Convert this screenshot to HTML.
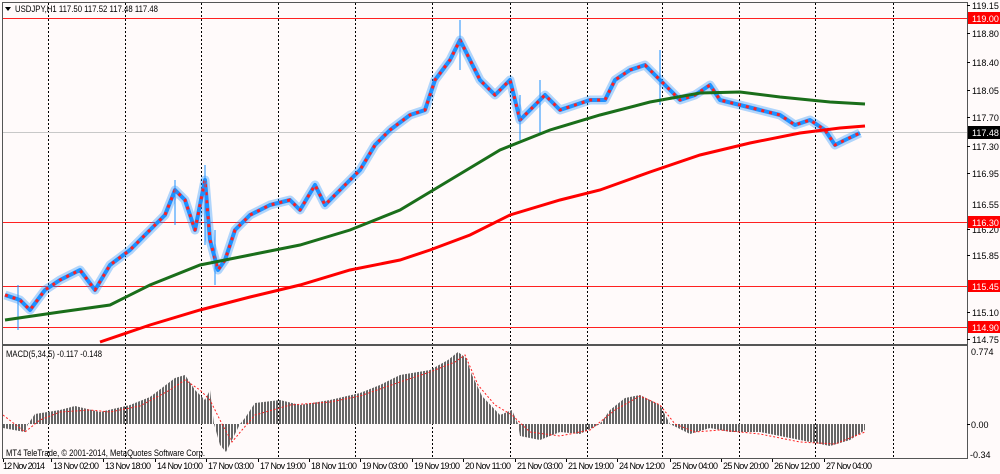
<!DOCTYPE html>
<html><head><meta charset="utf-8"><style>
html,body{margin:0;padding:0;background:#fff;}
svg{display:block;font-family:"Liberation Sans",sans-serif;}
</style></head><body>
<svg width="1000" height="474" viewBox="0 0 1000 474" xmlns="http://www.w3.org/2000/svg">
<defs>
<pattern id="st" width="3" height="10" patternUnits="userSpaceOnUse"><rect x="0" y="0" width="2" height="10" fill="#666"/></pattern>
</defs>
<rect width="1000" height="474" fill="#fffafa"/>
<g stroke="#000" stroke-width="1" stroke-dasharray="2,2">
<line x1="48.5" y1="3" x2="48.5" y2="458"/><line x1="125.5" y1="3" x2="125.5" y2="458"/><line x1="201.5" y1="3" x2="201.5" y2="458"/><line x1="278.5" y1="3" x2="278.5" y2="458"/><line x1="355.5" y1="3" x2="355.5" y2="458"/><line x1="432.5" y1="3" x2="432.5" y2="458"/><line x1="510.5" y1="3" x2="510.5" y2="458"/><line x1="587.5" y1="3" x2="587.5" y2="458"/><line x1="662.5" y1="3" x2="662.5" y2="458"/><line x1="739.5" y1="3" x2="739.5" y2="458"/><line x1="815.5" y1="3" x2="815.5" y2="458"/><line x1="893.5" y1="3" x2="893.5" y2="458"/>
</g>
<g stroke="#ff2020" stroke-width="1">
<line x1="3" y1="18.5" x2="967" y2="18.5"/><line x1="3" y1="222.5" x2="967" y2="222.5"/><line x1="3" y1="286.5" x2="967" y2="286.5"/><line x1="3" y1="327.5" x2="967" y2="327.5"/>
</g>
<line x1="3" y1="132.5" x2="967" y2="132.5" stroke="#c8c8c8"/>
<polyline fill="none" stroke="#1e90ff" stroke-width="9" stroke-opacity="0.35" stroke-linejoin="round" points="5,295 20,300 30,310 45,290 60,280 80,270 95,290 110,265 130,250 150,230 165,215 175,190 185,200 195,230 205,180 210,240 218,270 225,260 235,230 250,215 270,205 290,200 300,210 315,185 325,205 345,185 360,170 375,145 390,130 410,115 425,110 435,80 450,60 460,40 470,60 480,80 495,95 510,80 520,120 530,110 545,95 560,110 575,105 590,100 605,100 615,80 630,70 645,65 660,80 670,90 680,100 695,95 710,85 720,100 740,105 760,110 780,115 795,125 810,120 825,130 835,145 845,140 860,133"/>
<polyline fill="none" stroke="#1e90ff" stroke-width="4" stroke-linejoin="round" points="5,295 20,300 30,310 45,290 60,280 80,270 95,290 110,265 130,250 150,230 165,215 175,190 185,200 195,230 205,180 210,240 218,270 225,260 235,230 250,215 270,205 290,200 300,210 315,185 325,205 345,185 360,170 375,145 390,130 410,115 425,110 435,80 450,60 460,40 470,60 480,80 495,95 510,80 520,120 530,110 545,95 560,110 575,105 590,100 605,100 615,80 630,70 645,65 660,80 670,90 680,100 695,95 710,85 720,100 740,105 760,110 780,115 795,125 810,120 825,130 835,145 845,140 860,133"/>
<polyline fill="none" stroke="#ff2020" stroke-width="3" stroke-dasharray="3,5" stroke-linejoin="round" points="5,295 20,300 30,310 45,290 60,280 80,270 95,290 110,265 130,250 150,230 165,215 175,190 185,200 195,230 205,180 210,240 218,270 225,260 235,230 250,215 270,205 290,200 300,210 315,185 325,205 345,185 360,170 375,145 390,130 410,115 425,110 435,80 450,60 460,40 470,60 480,80 495,95 510,80 520,120 530,110 545,95 560,110 575,105 590,100 605,100 615,80 630,70 645,65 660,80 670,90 680,100 695,95 710,85 720,100 740,105 760,110 780,115 795,125 810,120 825,130 835,145 845,140 860,133"/>
<g stroke="#1e90ff" stroke-width="1">
<line x1="175" y1="180" x2="175" y2="225"/><line x1="205" y1="165" x2="205" y2="245"/><line x1="215" y1="230" x2="215" y2="285"/><line x1="460" y1="20" x2="460" y2="70"/><line x1="520" y1="95" x2="520" y2="140"/><line x1="660" y1="50" x2="660" y2="105"/><line x1="540" y1="80" x2="540" y2="135"/><line x1="18" y1="285" x2="18" y2="330"/>
</g>
<polyline fill="none" stroke="#1a6e1a" stroke-width="3" points="5,320 60,312 110,305 150,285 200,265 250,255 300,245 350,230 400,210 450,180 500,150 550,130 600,115 650,102 700,93 740,92 780,97 830,102 865,104"/>
<polyline fill="none" stroke="#ff0000" stroke-width="3" points="100,342 150,325 200,310 250,297 300,285 350,270 400,260 430,250 470,235 510,215 560,200 600,190 650,172 700,155 750,143 800,133 840,128 865,126"/>
<polygon fill="url(#st)" points="3,424 3,428 25,432 28,424 35,414 60,410 75,406 100,412 130,405 150,397 175,378 185,375 195,390 205,400 210,390 214,424 220,445 226,452 232,440 240,424 245,418 255,403 280,400 300,405 330,400 360,393 380,385 400,375 430,370 448,360 458,352 466,358 472,375 482,396 500,415 512,410 518,424 520,436 540,440 560,432 580,434 600,424 610,410 625,398 640,395 660,405 670,424 690,434 710,428 730,432 760,432 800,440 830,446 850,440 865,430 865,424"/>
<polyline fill="none" stroke="#ff2020" stroke-width="1" stroke-dasharray="2,2" points="3,415 25,432 40,420 60,412 90,410 110,412 140,406 170,390 185,380 200,390 210,400 222,424 232,442 242,430 255,415 290,405 330,402 360,396 400,382 430,372 455,362 465,355 478,385 495,405 512,415 530,432 560,436 590,430 615,410 640,396 660,405 675,424 695,432 720,430 760,434 800,442 835,444 865,432"/>
<g stroke="#555" fill="none">
<rect x="2.5" y="2.5" width="965" height="342"/>
<rect x="2.5" y="345.5" width="965" height="113"/>
</g>
<polygon points="5,7 11,7 8,11" fill="#000"/>
<text x="15" y="12" font-size="9" fill="#000" textLength="143" lengthAdjust="spacingAndGlyphs">USDJPY,H1  117.50 117.52 117.48 117.48</text>
<text x="6" y="357" font-size="9" fill="#000" textLength="96" lengthAdjust="spacingAndGlyphs">MACD(5,34,5) -0.117 -0.148</text>
<text x="6" y="456" font-size="9" fill="#000" textLength="199" lengthAdjust="spacingAndGlyphs">MT4 TeleTrade, © 2001-2014, MetaQuotes Software Corp.</text>
<g font-size="9" fill="#000">
<text x="972" y="9">119.15</text><text x="972" y="37">118.80</text><text x="972" y="66">118.40</text><text x="972" y="94">118.05</text><text x="972" y="121">117.70</text><text x="972" y="150">117.30</text><text x="972" y="177">116.95</text><text x="972" y="208">116.55</text><text x="972" y="233">116.20</text><text x="972" y="259">115.85</text><text x="972" y="316">115.10</text><text x="972" y="343">114.75</text>
<text x="971" y="355">0.774</text><text x="971" y="428">0.00</text><text x="970" y="458">-0.34</text>
</g>
<g stroke="#000"><line x1="967" y1="5.5" x2="970" y2="5.5"/><line x1="967" y1="33.5" x2="970" y2="33.5"/><line x1="967" y1="62.5" x2="970" y2="62.5"/><line x1="967" y1="90.5" x2="970" y2="90.5"/><line x1="967" y1="117.5" x2="970" y2="117.5"/><line x1="967" y1="146.5" x2="970" y2="146.5"/><line x1="967" y1="173.5" x2="970" y2="173.5"/><line x1="967" y1="229.5" x2="970" y2="229.5"/><line x1="967" y1="255.5" x2="970" y2="255.5"/><line x1="967" y1="312.5" x2="970" y2="312.5"/><line x1="967" y1="339.5" x2="970" y2="339.5"/><line x1="967" y1="424.5" x2="970" y2="424.5"/></g>
<rect x="968" y="12" width="32" height="12" fill="#ff0000"/><text x="972" y="22" font-size="9" fill="#fff">119.00</text>
<rect x="968" y="126" width="32" height="13" fill="#000"/><text x="972" y="136" font-size="9" fill="#fff">117.48</text>
<rect x="968" y="216" width="32" height="12" fill="#ff0000"/><text x="972" y="226" font-size="9" fill="#fff">116.30</text>
<rect x="968" y="280" width="32" height="12" fill="#ff0000"/><text x="972" y="290" font-size="9" fill="#fff">115.45</text>
<rect x="968" y="321" width="32" height="12" fill="#ff0000"/><text x="972" y="331" font-size="9" fill="#fff">114.90</text>
<g font-size="9" fill="#000" lengthAdjust="spacingAndGlyphs">
<text x="3" y="469" textLength="42">12 Nov 2014</text>
<text x="53" y="469" textLength="46">13 Nov 02:00</text><text x="105" y="469" textLength="46">13 Nov 18:00</text><text x="157" y="469" textLength="46">14 Nov 10:00</text><text x="208" y="469" textLength="46">17 Nov 03:00</text><text x="260" y="469" textLength="46">17 Nov 19:00</text><text x="311" y="469" textLength="46">18 Nov 11:00</text><text x="362" y="469" textLength="46">19 Nov 03:00</text><text x="414" y="469" textLength="46">19 Nov 19:00</text><text x="465" y="469" textLength="46">20 Nov 11:00</text><text x="517" y="469" textLength="46">21 Nov 03:00</text><text x="568" y="469" textLength="46">21 Nov 19:00</text><text x="619" y="469" textLength="46">24 Nov 12:00</text><text x="672" y="469" textLength="46">25 Nov 04:00</text><text x="723" y="469" textLength="46">25 Nov 20:00</text><text x="774" y="469" textLength="46">26 Nov 12:00</text><text x="826" y="469" textLength="46">27 Nov 04:00</text>
</g>
<g stroke="#000"><line x1="3.5" y1="459" x2="3.5" y2="462"/><line x1="51.5" y1="459" x2="51.5" y2="462"/><line x1="103.5" y1="459" x2="103.5" y2="462"/><line x1="155.5" y1="459" x2="155.5" y2="462"/><line x1="206.5" y1="459" x2="206.5" y2="462"/><line x1="258.5" y1="459" x2="258.5" y2="462"/><line x1="309.5" y1="459" x2="309.5" y2="462"/><line x1="360.5" y1="459" x2="360.5" y2="462"/><line x1="412.5" y1="459" x2="412.5" y2="462"/><line x1="463.5" y1="459" x2="463.5" y2="462"/><line x1="515.5" y1="459" x2="515.5" y2="462"/><line x1="566.5" y1="459" x2="566.5" y2="462"/><line x1="617.5" y1="459" x2="617.5" y2="462"/><line x1="670.5" y1="459" x2="670.5" y2="462"/><line x1="721.5" y1="459" x2="721.5" y2="462"/><line x1="772.5" y1="459" x2="772.5" y2="462"/><line x1="824.5" y1="459" x2="824.5" y2="462"/></g>
</svg>
</body></html>
